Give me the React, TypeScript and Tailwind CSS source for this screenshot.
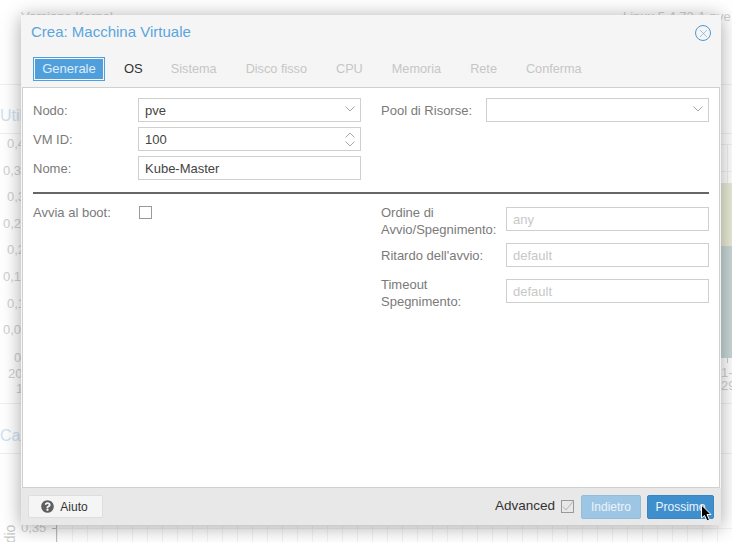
import React from 'react';
import { FaQuestionCircle } from 'react-icons/fa';
import { X } from 'lucide-react';

const font = "font-['Liberation_Sans',sans-serif]";

function Field({ label, w = 'w-[105px]', labelClass = 'pt-[4px]', children }: { label: React.ReactNode; w?: string; labelClass?: string; children: React.ReactNode }) {
  return (
    <div className="flex items-start h-[24px]">
      <div className={`${w} ${labelClass} shrink-0 text-[13px] leading-[17px] text-[#7a7a7a]`}>{label}</div>
      {children}
    </div>
  );
}

function Box({ value, placeholder, icon }: { value?: string; placeholder?: string; icon?: React.ReactNode }) {
  return (
    <div className="flex-1 h-[24px] border border-[#cfcfcf] bg-white flex items-center justify-between pl-[6px] pr-[5px] text-[13px]">
      {value ? <span className="text-[#444] pt-px">{value}</span> : <span className="text-[#c8c8c8] pt-px">{placeholder}</span>}
      {icon}
    </div>
  );
}

const chevron = (
  <svg width="10" height="6" viewBox="0 0 10 6" className="text-[#a8a8a8] -mt-[3px]">
    <path d="M0.5 0.5 L5 5 L9.5 0.5" fill="none" stroke="currentColor" />
  </svg>
);

const spinner = (
  <span className="flex flex-col gap-[3px]">
    <svg width="10" height="6" viewBox="0 0 10 6" className="text-[#a8a8a8]">
      <path d="M0.5 5.5 L5 1 L9.5 5.5" fill="none" stroke="currentColor" />
    </svg>
    <svg width="10" height="6" viewBox="0 0 10 6" className="text-[#a8a8a8]">
      <path d="M0.5 0.5 L5 5 L9.5 0.5" fill="none" stroke="currentColor" />
    </svg>
  </span>
);

export default function App() {
  const tabs = ['Sistema', 'Disco fisso', 'CPU', 'Memoria', 'Rete', 'Conferma'];

  return (
    <div className={`${font} relative w-[732px] h-[542px] bg-white overflow-hidden`}>
      {/* page behind the dialog */}
      <div className="absolute left-[21px] top-[7px] text-[13px] text-[#d0d0d0]">Versione Kernel</div>
      <div className="absolute left-[623px] top-[7px] text-[13px] text-[#d0d0d0] whitespace-nowrap">Linux 5.4.73-1-pve</div>
      <div className="absolute left-0 top-[104px] text-[16px] text-[#cfe2f2] whitespace-nowrap">Util</div>
      <div className="absolute left-0 top-[424px] text-[16px] text-[#cfe2f2] whitespace-nowrap">Ca</div>
      <div className="absolute left-0 top-[84px] w-full h-px bg-[#efefef]" />
      <div className="absolute left-0 top-[133px] w-full h-px bg-[#efefef]" />
      <div className="absolute left-0 top-[403px] w-full h-px bg-[#efefef]" />
      <div className="absolute left-0 top-[453px] w-full h-px bg-[#efefef]" />
      <div className="absolute left-[721px] top-[144px] w-[11px] h-px bg-[#f0f0f0]" />
      <div className="absolute left-[721px] top-[171px] w-[11px] h-px bg-[#f0f0f0]" />
      <div className="absolute left-[727px] top-[144px] w-px h-[39px] bg-[#f0f0f0]" />
      <div className="absolute left-[721px] top-[183px] w-[11px] h-[63px] bg-[#e8ebd6]" />
      <div className="absolute left-[721px] top-[246px] w-[11px] h-[112px] bg-[#c9d7d7]" />
      <div className="absolute left-[727px] top-[358px] w-px h-[5px] bg-[#ccc]" />
      <div className="absolute left-[721px] top-[366px] text-[13px] leading-[13px] text-[#cfcfcf] whitespace-nowrap">1-0<br />29</div>
      {['0,4', '0,3', '0,3', '0,2', '0,2', '0,1', '0,1', '0,0'].map((t, i) => (
        <div key={i} className="absolute text-[13px] leading-[16px] text-[#d0d0d0]" style={{ left: i % 2 ? 3 : 7, top: 136 + i * 26.6 }}>{t}</div>
      ))}
      <div className="absolute left-[14px] top-[350px] text-[13px] leading-[16px] text-[#d0d0d0]">0</div>
      <div className="absolute left-[8px] top-[366px] text-[13px] leading-[16px] text-[#d0d0d0]">20</div>
      <div className="absolute left-[16px] top-[381px] text-[13px] leading-[16px] text-[#d0d0d0]">1</div>

      {/* chart grid under the dialog */}
      <div className="absolute left-[57px] top-[526px] right-0 h-[16px] bg-[linear-gradient(to_right,#f2f2f2_1px,transparent_1px)] bg-[size:15px_100%]" />
      <div className="absolute left-[57px] top-[528px] right-0 h-px bg-[#f2f2f2]" />
      <div className="absolute left-[21px] top-[520px] text-[13px] leading-[16px] text-[#cfcfcf]">0,35</div>
      <div className="absolute left-[52px] top-[528px] w-[5px] h-px bg-[#bbb]" />
      <div className="absolute left-[56px] top-[525px] w-px h-[17px] bg-[#bbb]" />
      <div className="absolute left-[1px] top-[526px] text-[14px] leading-[16px] text-[#c8c8c8] -rotate-90 origin-center">dio</div>

      {/* dialog */}
      <div className="absolute left-[21px] top-[15px] w-[700px] h-[510px] flex flex-col bg-[#f5f5f5] shadow-[0_2px_18px_rgba(0,0,0,0.35)]">
        <div className="h-[34px] shrink-0 flex items-center justify-between pl-[10px] pr-[10px]">
          <span className="text-[15px] text-[#5aa5dc]">Crea: Macchina Virtuale</span>
          <div className="w-[16px] h-[16px] rounded-full border border-[#4a9ad6] flex items-center justify-center relative top-[1px]">
            <X className="w-[13px] h-[13px] text-[#4a9ad6]" strokeWidth={1} />
          </div>
        </div>
        <div className="h-[38px] shrink-0 flex items-start pt-[8px] pl-[12px] text-[12.7px]">
          <div className="h-[24px] w-[72px] border border-[#4f9fdc] p-px text-[13px]">
            <div className="h-full bg-[#4f9fdc] text-white/80 flex items-center justify-center">Generale</div>
          </div>
          <span className="ml-[19px] leading-[24px] text-[13px] text-[#333]">OS</span>
          {tabs.map((t, i) => (
            <span key={t} className={`${i === 0 ? 'ml-[28px]' : 'ml-[29px]'} leading-[24px] text-[#c6c6c6]`}>{t}</span>
          ))}
        </div>
        <div className="flex-1 mx-px border border-[#d0d0d0] bg-white px-[10px] pt-[10px]">
          <div className="flex gap-[20px]">
            <div className="w-[328px] flex flex-col gap-[5px]">
              <Field label="Nodo:"><Box value="pve" icon={chevron} /></Field>
              <Field label="VM ID:"><Box value="100" icon={spinner} /></Field>
              <Field label="Nome:"><Box value="Kube-Master" /></Field>
            </div>
            <div className="flex-1">
              <Field label="Pool di Risorse:"><Box icon={chevron} /></Field>
            </div>
          </div>
          <div className="h-[2px] bg-[#666] mt-[12px]" />
          <div className="flex gap-[20px] mt-[13px]">
            <div className="w-[328px] flex items-start">
              <div className="w-[105px] text-[13px] leading-[17px] -mt-[3px] text-[#7a7a7a]">Avvia al boot:</div>
              <div className="w-[13px] h-[13px] border border-[#999] bg-white -mt-px ml-px" />
            </div>
            <div className="flex-1 flex flex-col gap-[12px]">
              <Field w="w-[125px]" labelClass="-mt-[3px]" label={<>Ordine di<br />Avvio/Spegnimento:</>}><Box placeholder="any" /></Field>
              <Field w="w-[125px]" label="Ritardo dell'avvio:"><Box placeholder="default" /></Field>
              <Field w="w-[125px]" labelClass="-mt-[3px]" label={<>Timeout<br />Spegnimento:</>}><Box placeholder="default" /></Field>
            </div>
          </div>
        </div>
        <div className="h-[37px] shrink-0 bg-[#e8e8e8] flex items-center pl-[7px] pr-[7px] text-[13px]">
          <button className="h-[23px] w-[75px] rounded-[2px] border border-[#dedede] bg-[#f5f5f5] flex items-center justify-center gap-[6px] pr-[2px] text-[12px] text-[#333]">
            <FaQuestionCircle className="w-[13px] h-[13px] text-[#5f5f5f]" />
            Aiuto
          </button>
          <span className="ml-auto text-[#333] text-[13.5px]">Advanced</span>
          <svg width="13" height="13" viewBox="0 0 13 13" className="ml-[6px] overflow-visible">
            <rect x="0.5" y="0.5" width="12" height="12" fill="none" stroke="#999" />
            <path d="M2 6.5 L5 10 L12.5 1" fill="none" stroke="#b5b5b5" />
          </svg>
          <button className="ml-[7px] h-[24px] w-[60px] rounded-[2px] bg-[#9dc5e4] border border-[#93bddd] text-white/80 text-[12px]">Indietro</button>
          <button className="ml-[6px] h-[24px] w-[67px] rounded-[2px] bg-[#3f8fcd] border border-[#3a86c2] text-white/90 text-[12px]">Prossimo</button>
        </div>
      </div>

      {/* mouse pointer */}
      <svg className="absolute left-[700px] top-[504px]" width="13" height="19" viewBox="0 0 13 19">
        <path d="M1.5 1 L1.5 14 L4.5 11.5 L7 17 L9.5 16 L7 10.5 L11 10.5 Z" fill="#000" stroke="#fff" strokeWidth="1" />
      </svg>
    </div>
  );
}
